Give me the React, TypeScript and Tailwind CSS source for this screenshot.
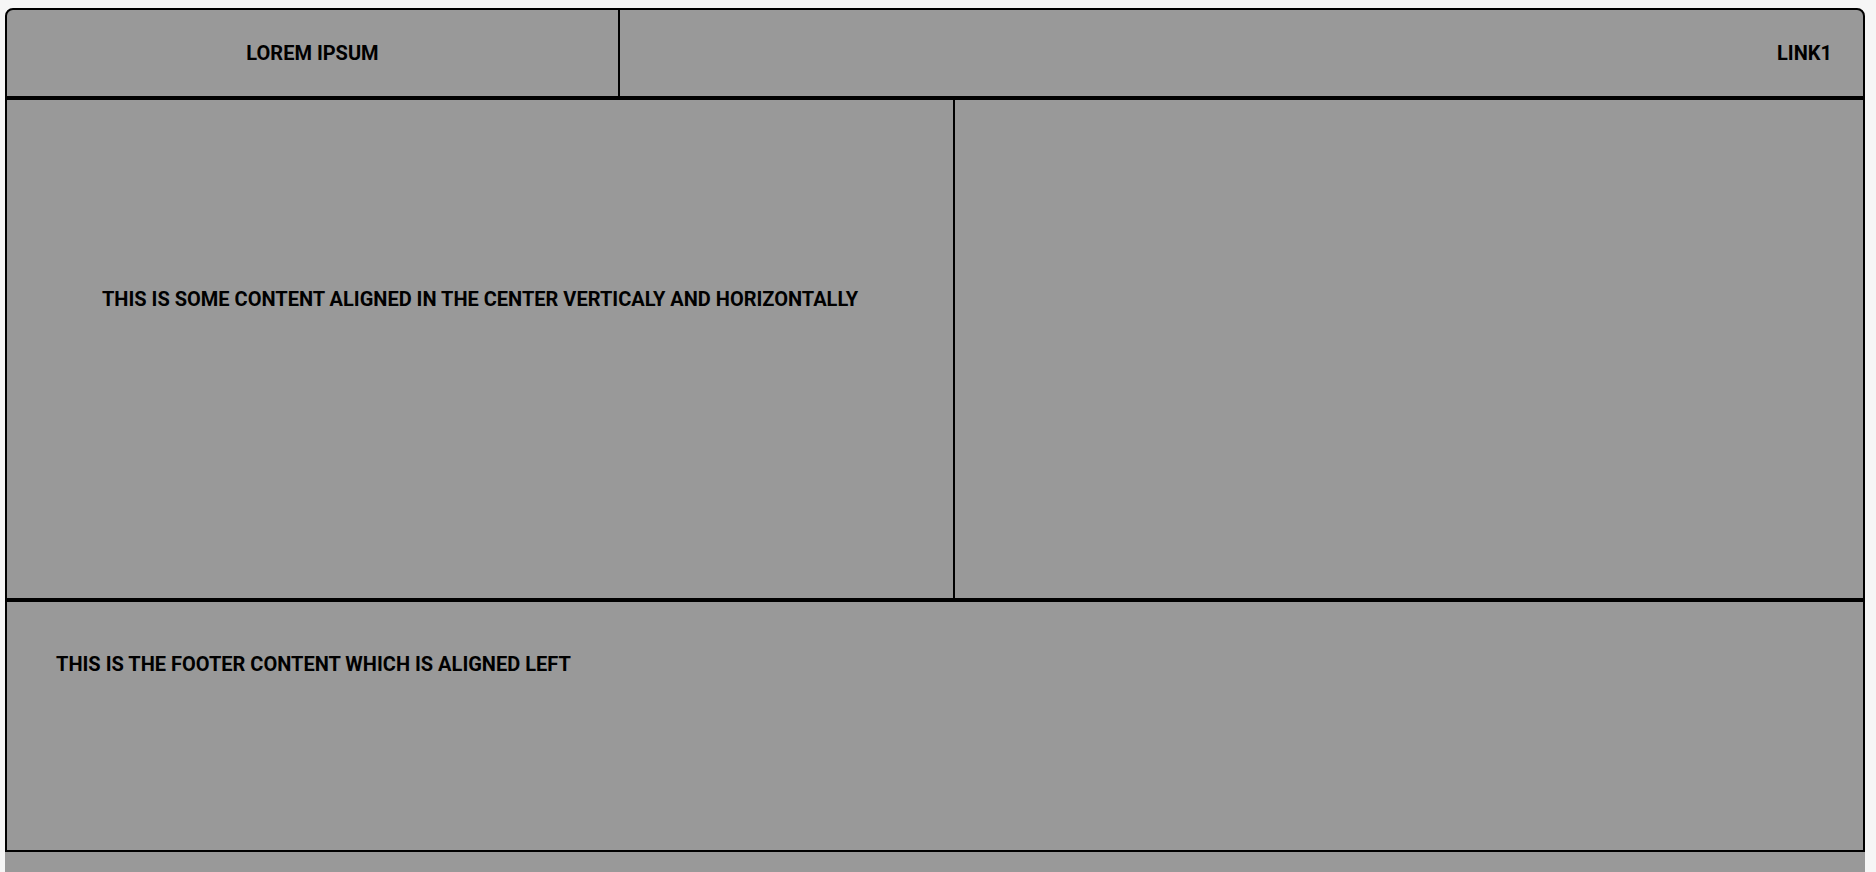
// layout: header / main / footer boxes on a light page
export default function App() {
  return (
    <div className="min-h-[872px] bg-[#f6f6f6] pt-[8px] pl-[5px] font-['Roboto',sans-serif] text-xl font-bold text-black">
      <div className="w-[1860px]">
        {/* header */}
        <header className="flex h-[90px] rounded-t-lg border-2 border-black bg-[#999999]">
          <div className="flex w-[613px] items-center justify-center border-r-2 border-black">
            LOREM IPSUM
          </div>
          <nav className="flex flex-1 items-center justify-end pr-[31px]">
            <a>LINK1</a>
          </nav>
        </header>

        {/* main */}
        <main className="flex h-[502px] border-2 border-black bg-[#999999]">
          <div className="flex w-[948px] items-center justify-center border-r-2 border-black pb-[100px]">
            THIS IS SOME CONTENT ALIGNED IN THE CENTER VERTICALY AND HORIZONTALLY
          </div>
          <div className="flex-1" />
        </main>

        {/* footer */}
        <footer className="h-[252px] border-2 border-black bg-[#999999] pl-[49px] pr-12 pt-12">
          THIS IS THE FOOTER CONTENT WHICH IS ALIGNED LEFT
        </footer>

        <div className="h-[40px] bg-[#999999]" />
      </div>
    </div>
  );
}
